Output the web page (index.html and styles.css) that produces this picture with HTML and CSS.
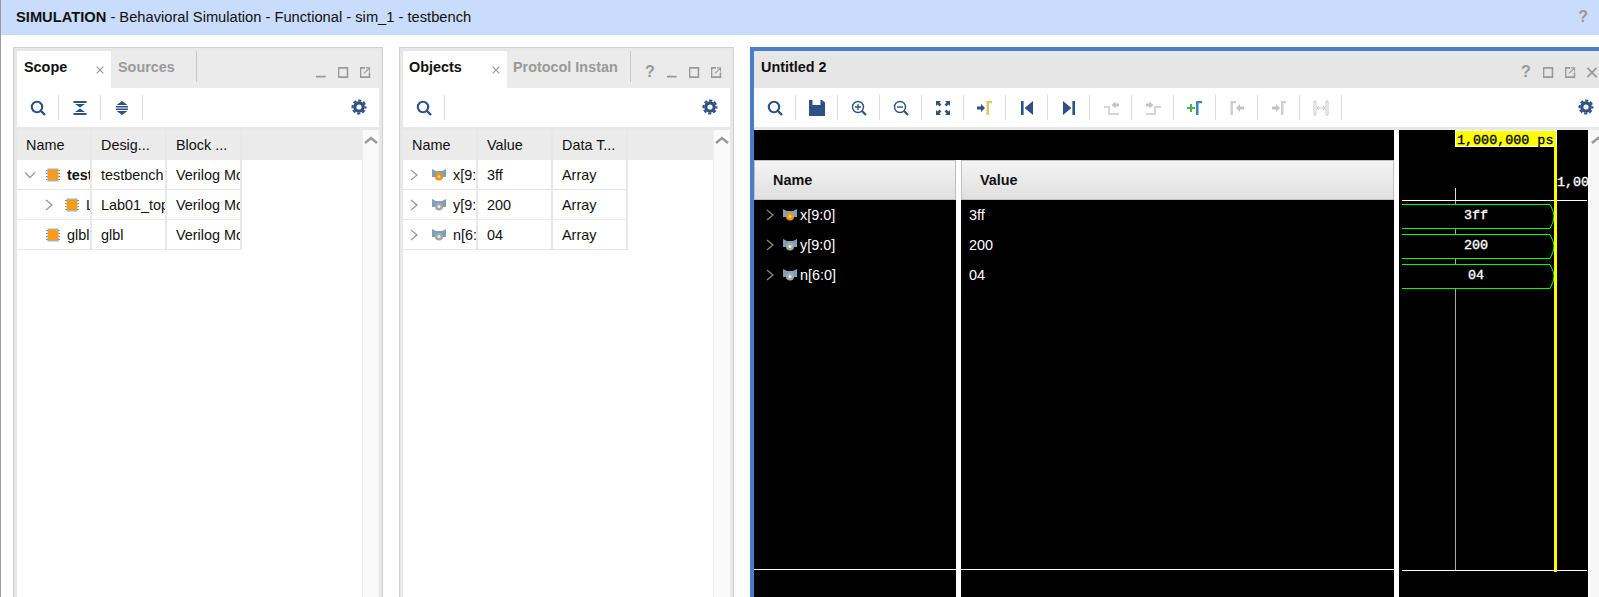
FILE: index.html
```html
<!DOCTYPE html>
<html lang="en">
<head>
    <meta charset="UTF-8">
    <title>SIMULATION - Behavioral Simulation</title>
    <link rel="stylesheet" href="styles.css">
</head>
<body>
    <svg class="defs" width="0" height="0">
        <symbol id="i-search" viewBox="0 0 16 16"><circle cx="7" cy="7" r="5.200" fill="none" stroke="currentColor" stroke-width="2.100"/><path d="M10.500 10.500l4.500 4.500" stroke="currentColor" stroke-width="2.400"/></symbol>
        <symbol id="i-zoomin" viewBox="0 0 16 16"><circle cx="7" cy="7" r="5.500" fill="none" stroke="currentColor" stroke-width="1.400"/><path d="M4 7h6M7 4v6" stroke="currentColor" stroke-width="1.300"/><path d="M11 11l4 4" stroke="currentColor" stroke-width="2.200"/></symbol>
        <symbol id="i-zoomout" viewBox="0 0 16 16"><circle cx="7" cy="7" r="5.500" fill="none" stroke="currentColor" stroke-width="1.400"/><path d="M4 7h6" stroke="currentColor" stroke-width="1.400"/><path d="M11 11l4 4" stroke="currentColor" stroke-width="2.200"/></symbol>
        <symbol id="i-gear" viewBox="0 0 16 16"><circle cx="8" cy="8" r="4.200" fill="none" stroke="currentColor" stroke-width="3.200"/><circle cx="8" cy="8" r="6.500" fill="none" stroke="currentColor" stroke-width="2" stroke-dasharray="3.200 1.900" stroke-dashoffset="1.600"/></symbol>
        <symbol id="i-collapse" viewBox="0 0 16 16"><path d="M1.500 1h13v2h-13zM1.500 13h13v2h-13zM3 4h10L8 7.500zM8 8.500L13 12H3z" fill="currentColor"/></symbol>
        <symbol id="i-expand" viewBox="0 0 16 16"><path d="M8 1l5.500 4h-11zM2 6h12v1.500H2zM2 8.500h12V10H2zM2.500 11h11L8 15z" fill="currentColor"/></symbol>
        <symbol id="i-save" viewBox="0 0 16 16"><path d="M0 0h3.500v5h8V0H13l3 2.500V16H0z" fill="currentColor"/></symbol>
        <symbol id="i-fit" viewBox="0 0 16 16"><path d="M1 1h5L4.400 2.600l2 2-1.800 1.800-2-2L1 6zM15 1v5l-1.600-1.600-2 2-1.800-1.800 2-2L10 1zM1 15v-5l1.600 1.600 2-2 1.800 1.800-2 2L6 15zM15 15h-5l1.600-1.600-2-2 1.800-1.800 2 2L15 10z" fill="currentColor"/></symbol>
        <symbol id="i-first" viewBox="0 0 16 16"><path d="M2 1h2.600v14H2zM14 1v14L5.600 8z" fill="currentColor"/></symbol>
        <symbol id="i-last" viewBox="0 0 16 16"><path d="M14 1h-2.600v14H14zM2 1v14l8.400-7z" fill="currentColor"/></symbol>
        <symbol id="i-gomark" viewBox="0 0 16 16"><path d="M0 6.500h4V4l4 4-4 4V9.500H0z" fill="#2f5085"/><path d="M9.500 15V1H15v2.200h-3V15z" fill="#e5c75f"/></symbol>
        <symbol id="i-prevedge" viewBox="0 0 16 16"><path d="M1 7h5v7h10" fill="none" stroke="#d5d5d5" stroke-width="2"/><path d="M16 3.500h-3.500V1.500L8.500 5l4 3.500v-2H16z" fill="#c4c4c4"/></symbol>
        <symbol id="i-nextedge" viewBox="0 0 16 16"><path d="M1 3.500h3.500V1.500l4 3.500-4 3.500v-2H1z" fill="#c4c4c4"/><path d="M1 14h9V7h6" fill="none" stroke="#d5d5d5" stroke-width="2"/></symbol>
        <symbol id="i-addmark" viewBox="0 0 16 16"><path d="M0 7h3V4h2v3h3v2H5v3H3V9H0z" fill="#4fae4f"/><path d="M9 15V1h6v2.200h-3.500V15z" fill="#3d86b5"/></symbol>
        <symbol id="i-prevmark" viewBox="0 0 16 16"><path d="M1.500 15V1H7v2.200H4V15z" fill="#cfcfcf"/><path d="M15 6.500h-4V4L7 8l4 4V9.500h4z" fill="#c4c4c4"/></symbol>
        <symbol id="i-nextmark" viewBox="0 0 16 16"><path d="M1 6.500h4V4l4 4-4 4V9.500H1z" fill="#c4c4c4"/><path d="M10 15V1h5v2.200h-2.500V15z" fill="#cfcfcf"/></symbol>
        <symbol id="i-span" viewBox="0 0 16 16"><path d="M1 1h2v14H1zM13 1h2v14h-2z" fill="none" stroke="#c8c8c8"/><path d="M4 8h8M4 8l2-2M4 8l2 2M12 8l-2-2M12 8l-2 2" fill="none" stroke="#c8c8c8"/></symbol>
        <symbol id="i-min" viewBox="0 0 12 12"><path d="M0 10.500h11" stroke="currentColor" stroke-width="2"/></symbol>
        <symbol id="i-box" viewBox="0 0 12 12"><path d="M1 1h10v10H1z" fill="none" stroke="currentColor" stroke-width="2"/></symbol>
        <symbol id="i-float" viewBox="0 0 12 12"><path d="M6 1H1v10h10V6" fill="none" stroke="currentColor" stroke-width="2"/><path d="M5 7l5-5M7 1h4v4" fill="none" stroke="currentColor" stroke-width="1.300"/></symbol>
        <symbol id="i-x" viewBox="0 0 12 12"><path d="M1 1l10 10M11 1L1 11" stroke="currentColor" stroke-width="1.800"/></symbol>
        <symbol id="i-right" viewBox="0 0 16 16"><path d="M5 3l6 5-6 5" fill="none" stroke="currentColor" stroke-width="1.300"/></symbol>
        <symbol id="i-down" viewBox="0 0 16 16"><path d="M3 5.500l5 5 5-5" fill="none" stroke="currentColor" stroke-width="1.300"/></symbol>
        <symbol id="i-up" viewBox="0 0 16 16"><path d="M2 11l6-5 6 5" fill="none" stroke="currentColor" stroke-width="2.400"/></symbol>
        <symbol id="i-chip" viewBox="0 0 14 14"><path d="M0 2.500h14M0 5.500h14M0 8.500h14M0 11.500h14" stroke="#8a8a8a"/><rect x="1.500" y="0.500" width="11" height="13" fill="#b0b0b0"/><rect x="2" y="2" width="10" height="10" fill="#f89c1c"/></symbol>
        <symbol id="i-sig-v" viewBox="0 0 14 14"><path d="M0 1l4 2h6l4-2v8H0z" fill="#7d9fb8"/><circle cx="7" cy="8.500" r="4" fill="#f0921e"/><circle cx="7" cy="8.500" r="1.300" fill="#fbe3b8"/></symbol>
        <symbol id="i-sig-g" viewBox="0 0 14 14"><path d="M0 1l4 2h6l4-2v8H0z" fill="#7d9fb8"/><circle cx="7" cy="8.500" r="4" fill="#a6a6a6"/><circle cx="7" cy="8.500" r="1.500" fill="#eeeeee"/></symbol>
    </svg>

    <div class="app">
        <div class="titlebar">
            <span><b>SIMULATION</b> - Behavioral Simulation - Functional - sim_1 - testbench</span>
            <span class="help title-help">?</span>
        </div>

        <div class="main">
            <section class="panel panel-scope">
                <div class="panel-head">
                    <div class="tab active tab-scope">Scope <svg class="tab-x"><use href="#i-x"/></svg></div>
                    <div class="tab tab-sources">Sources</div>
                    <div class="win-btns">
                        <svg class="win"><use href="#i-min"/></svg>
                        <svg class="win"><use href="#i-box"/></svg>
                        <svg class="win"><use href="#i-float"/></svg>
                    </div>
                </div>
                <div class="toolbar">
                    <div class="tool"><svg><use href="#i-search"/></svg></div><i class="sep"></i>
                    <div class="tool"><svg><use href="#i-collapse"/></svg></div><i class="sep"></i>
                    <div class="tool"><svg><use href="#i-expand"/></svg></div><i class="sep"></i>
                    <div class="tool gear"><svg><use href="#i-gear"/></svg></div>
                </div>
                <div class="table-wrap">
                    <div class="table">
                        <div class="grid-head">
                            <div class="cell">Name</div><div class="cell">Desig...</div><div class="cell">Block ...</div>
                        </div>
                        <div class="grid-row">
                            <div class="cell tree"><svg class="twist"><use href="#i-down"/></svg><svg class="icon"><use href="#i-chip"/></svg><b class="tree-label">testbench</b></div>
                            <div class="cell">testbench</div><div class="cell">Verilog Module</div>
                        </div>
                        <div class="grid-row">
                            <div class="cell tree level1"><svg class="twist"><use href="#i-right"/></svg><svg class="icon"><use href="#i-chip"/></svg><span class="tree-label">Lab01_top</span></div>
                            <div class="cell">Lab01_top</div><div class="cell">Verilog Module</div>
                        </div>
                        <div class="grid-row">
                            <div class="cell tree"><span class="twist"></span><svg class="icon"><use href="#i-chip"/></svg><span class="tree-label">glbl</span></div>
                            <div class="cell">glbl</div><div class="cell">Verilog Module</div>
                        </div>
                    </div>
                    <div class="vscroll"><svg class="up"><use href="#i-up"/></svg></div>
                </div>
            </section>

            <section class="panel panel-objects">
                <div class="panel-head">
                    <div class="tab active tab-objects">Objects <svg class="tab-x"><use href="#i-x"/></svg></div>
                    <div class="tab tab-protocol">Protocol Instan</div>
                    <div class="win-btns">
                        <span class="help">?</span>
                        <svg class="win"><use href="#i-min"/></svg>
                        <svg class="win"><use href="#i-box"/></svg>
                        <svg class="win"><use href="#i-float"/></svg>
                    </div>
                </div>
                <div class="toolbar">
                    <div class="tool"><svg><use href="#i-search"/></svg></div><i class="sep"></i>
                    <div class="tool gear"><svg><use href="#i-gear"/></svg></div>
                </div>
                <div class="table-wrap">
                    <div class="table">
                        <div class="grid-head">
                            <div class="cell">Name</div><div class="cell">Value</div><div class="cell">Data T...</div>
                        </div>
                        <div class="grid-row">
                            <div class="cell obj"><svg class="twist"><use href="#i-right"/></svg><svg class="icon"><use href="#i-sig-v"/></svg><span class="tree-label">x[9:0]</span></div>
                            <div class="cell">3ff</div><div class="cell">Array</div>
                        </div>
                        <div class="grid-row">
                            <div class="cell obj"><svg class="twist"><use href="#i-right"/></svg><svg class="icon"><use href="#i-sig-g"/></svg><span class="tree-label">y[9:0]</span></div>
                            <div class="cell">200</div><div class="cell">Array</div>
                        </div>
                        <div class="grid-row">
                            <div class="cell obj"><svg class="twist"><use href="#i-right"/></svg><svg class="icon"><use href="#i-sig-g"/></svg><span class="tree-label">n[6:0]</span></div>
                            <div class="cell">04</div><div class="cell">Array</div>
                        </div>
                    </div>
                    <div class="vscroll"><svg class="up"><use href="#i-up"/></svg></div>
                </div>
            </section>

            <section class="panel panel-wave">
                <div class="panel-head wave-head">
                    <div class="wave-title">Untitled 2</div>
                    <div class="win-btns">
                        <span class="help">?</span>
                        <svg class="win"><use href="#i-box"/></svg>
                        <svg class="win"><use href="#i-float"/></svg>
                        <svg class="win"><use href="#i-x"/></svg>
                    </div>
                </div>
                <div class="toolbar">
                    <div class="tool"><svg><use href="#i-search"/></svg></div><i class="sep"></i>
                    <div class="tool"><svg><use href="#i-save"/></svg></div><i class="sep"></i>
                    <div class="tool"><svg><use href="#i-zoomin"/></svg></div><i class="sep"></i>
                    <div class="tool"><svg><use href="#i-zoomout"/></svg></div><i class="sep"></i>
                    <div class="tool"><svg><use href="#i-fit"/></svg></div><i class="sep"></i>
                    <div class="tool"><svg><use href="#i-gomark"/></svg></div><i class="sep"></i>
                    <div class="tool"><svg><use href="#i-first"/></svg></div><i class="sep"></i>
                    <div class="tool"><svg><use href="#i-last"/></svg></div><i class="sep"></i>
                    <div class="tool"><svg><use href="#i-prevedge"/></svg></div><i class="sep"></i>
                    <div class="tool"><svg><use href="#i-nextedge"/></svg></div><i class="sep"></i>
                    <div class="tool"><svg><use href="#i-addmark"/></svg></div><i class="sep"></i>
                    <div class="tool"><svg><use href="#i-prevmark"/></svg></div><i class="sep"></i>
                    <div class="tool"><svg><use href="#i-nextmark"/></svg></div><i class="sep"></i>
                    <div class="tool"><svg><use href="#i-span"/></svg></div><i class="sep"></i>
                    <div class="tool gear"><svg><use href="#i-gear"/></svg></div>
                </div>
                <div class="wave-body">
                    <div class="signals">
                        <div class="signals-top"></div>
                        <div class="signals-cols">
                            <div class="sig-col sig-name">
                                <div class="sig-head">Name</div>
                                <div class="sig-row"><svg class="twist"><use href="#i-right"/></svg><svg class="icon"><use href="#i-sig-v"/></svg><span>x[9:0]</span></div>
                                <div class="sig-row"><svg class="twist"><use href="#i-right"/></svg><svg class="icon"><use href="#i-sig-g"/></svg><span>y[9:0]</span></div>
                                <div class="sig-row"><svg class="twist"><use href="#i-right"/></svg><svg class="icon"><use href="#i-sig-g"/></svg><span>n[6:0]</span></div>
                                <div class="sig-foot"></div>
                            </div>
                            <div class="sig-col sig-value">
                                <div class="sig-head">Value</div>
                                <div class="sig-row">3ff</div>
                                <div class="sig-row">200</div>
                                <div class="sig-row">04</div>
                                <div class="sig-foot"></div>
                            </div>
                        </div>
                    </div>

                    <svg class="wave" width="189" height="467" viewBox="0 0 189 467">
                        <path d="M56.500 58V70" stroke="#ddd"/>
                        <path d="M56.500 70V440" stroke="#aaa"/>
                        <path d="M3 70.500H188" stroke="#fff"/>
                        <path d="M3 74.500H151L154 81 155 86 154 92 151 98.500H3" fill="#000" stroke="#0f0"/>
                        <path d="M3 104.500H151L154 111 155 116 154 122 151 128.500H3" fill="#000" stroke="#0f0"/>
                        <path d="M3 134.500H151L154 141 155 146 154 152 151 158.500H3" fill="#000" stroke="#0f0"/>
                        <path d="M3 440.500H188" stroke="#fff"/>
                        <rect x="56.500" y="0.500" width="101" height="16" fill="#ff0" stroke="#fff"/>
                        <rect x="155" y="16" width="3" height="426" fill="#ff0"/>
                        <text class="wave-text time-label" x="58" y="14">1,000,000 ps</text>
                        <text class="wave-text" x="158" y="56">1,000,000 ps</text>
                        <text class="wave-text" x="77" y="89" text-anchor="middle">3ff</text>
                        <text class="wave-text" x="77" y="119" text-anchor="middle">200</text>
                        <text class="wave-text" x="77" y="149" text-anchor="middle">04</text>
                    </svg>

                    <div class="vscroll wave-scroll"><svg class="up"><use href="#i-up"/></svg></div>
                </div>
            </section>
        </div>
    </div>
</body>
</html>
```

FILE: styles.css
```css
html, body {
    margin: 0;
    height: 100%;
    overflow: hidden;
}
body {
    font-family: "Liberation Sans", Arial, sans-serif;
    font-size: 14.4px;
    color: #111;
    background: #fff;
}
.defs {
    position: absolute;
}
.app {
    display: flex;
    flex-direction: column;
    height: 100%;
    border-left: 1px solid #999;
}
.titlebar {
    display: flex;
    justify-content: space-between;
    align-items: center;
    flex: none;
    height: 35px;
    padding: 0 11px 2px 15px;
    box-sizing: border-box;
    font-size: 14.7px;
    background: #c9dcfb;
    white-space: nowrap;
}
.help {
    width: 22px;
    text-align: center;
    font-size: 16px;
    font-weight: bold;
    color: #999;
}
.title-help {
    width: auto;
}
.main {
    display: flex;
    flex: 1;
    gap: 16px;
    min-height: 0;
    padding: 12px 0 0 12px;
    overflow: hidden;
}
.panel {
    display: flex;
    flex-direction: column;
    flex: none;
    box-sizing: border-box;
    padding: 3px 3px 0;
    background: #e8e8e8;
    border: 1px solid #d0d0d0;
    border-bottom: none;
}
.panel-scope {
    width: 370px;
}
.panel-objects {
    width: 335px;
}
.panel-wave {
    width: 860px;
    padding: 0;
    border: 4px solid #4a7cc9;
    border-bottom: none;
}

/* header with tabs */
.panel-head {
    display: flex;
    flex: none;
    height: 37px;
    background: #ebebeb;
}
.wave-head {
    background: #e6e6e6;
}
.wave-title {
    padding: 8px 0 0 7px;
    font-weight: bold;
}
.tab {
    position: relative;
    box-sizing: border-box;
    height: 37px;
    padding: 8px 0 0 7px;
    font-weight: bold;
    white-space: nowrap;
}
.tab.active {
    background: #fff;
}
.tab-scope {
    width: 94px;
}
.tab-objects {
    width: 104px;
    padding-left: 6px;
}
.tab-sources, .tab-protocol {
    height: 31px;
    color: #999;
    border-right: 1px solid #c8c8c8;
}
.tab-protocol {
    padding-left: 6px;
}
.tab-sources {
    width: 86px;
}
.tab-protocol {
    width: 124px;
}
.tab-x {
    position: absolute;
    right: 7px;
    top: 15px;
    width: 8px;
    height: 8px;
    color: #999;
}
.win-btns {
    display: flex;
    align-items: center;
    margin-left: auto;
    padding: 5px 3px 0 0;
    height: 32px;
    color: #999;
}
.win {
    width: 11px;
    height: 11px;
    padding: 0 5.5px;
}

/* toolbar */
.toolbar {
    display: flex;
    align-items: center;
    flex: none;
    height: 39px;
    background: #fff;
    color: #2f5085;
}
.tool {
    display: flex;
    justify-content: center;
    width: 41px;
}
.tool svg {
    width: 16px;
    height: 16px;
}
.sep {
    width: 1px;
    height: 25px;
    background: #ddd;
}
.gear {
    margin-left: auto;
    padding-bottom: 1px;
}

/* tables */
.table-wrap {
    display: flex;
    flex: 1;
    min-height: 0;
    margin-top: 3px;
    background: #fff;
}
.table {
    flex: 1;
}
.grid-head, .grid-row {
    display: grid;
    grid-template-columns: repeat(3, 75px);
}
.grid-head {
    height: 30px;
    background: #ebebeb;
}
.grid-row {
    height: 30px;
}
.cell {
    display: flex;
    align-items: center;
    box-sizing: border-box;
    padding-left: 9px;
    overflow: hidden;
    white-space: nowrap;
    border-right: 2px solid #e8e8e8;
}
.grid-row .cell {
    border-bottom: 1px solid #e8e8e8;
}
.tree {
    padding-left: 5px;
}
.tree.level1 {
    padding-left: 24px;
}
.obj {
    padding-left: 3px;
}
.twist {
    flex: none;
    width: 16px;
    height: 16px;
    color: #999;
}
.tree .twist {
    margin-right: 8px;
}
.obj .twist {
    margin-right: 10px;
}
.icon {
    flex: none;
    width: 14px;
    height: 14px;
    margin-right: 7px;
}
.tree-label {
    flex: none;
}
.vscroll {
    flex: none;
    width: 17px;
    box-sizing: border-box;
    background: #fafafa;
    border-left: 1px solid #eee;
    color: #999;
}
.up {
    display: block;
    width: 16px;
    height: 16px;
    margin-top: 2px;
}

/* waveform */
.wave-body {
    display: flex;
    flex: 1;
    min-height: 0;
    margin-top: 3px;
    background: #fff;
}
.signals {
    display: flex;
    flex-direction: column;
    flex: none;
    width: 640px;
    margin-right: 5px;
}
.signals-top {
    flex: none;
    height: 30px;
    background: #000;
}
.signals-cols {
    display: flex;
    flex: 1;
    gap: 5px;
    min-height: 0;
}
.sig-col {
    display: flex;
    flex-direction: column;
    background: #000;
    color: #fff;
}
.sig-name {
    flex: none;
    width: 202px;
}
.sig-value {
    flex: 1;
}
.sig-head {
    flex: none;
    display: flex;
    align-items: center;
    box-sizing: border-box;
    height: 40px;
    font-weight: bold;
    color: #111;
    background: linear-gradient(#f4f4f4, #e0e0e0);
    border: 1px solid #c0c0c0;
}
.sig-name .sig-head {
    padding-left: 18px;
}
.sig-value .sig-head {
    padding-left: 18px;
}
.sig-row {
    display: flex;
    align-items: center;
    flex: none;
    height: 30px;
}
.sig-name .sig-row {
    padding-left: 8px;
}
.sig-name .twist {
    margin-right: 5px;
    color: #888;
}
.sig-name .icon {
    margin-right: 3px;
}
.sig-value .sig-row {
    padding-left: 8px;
}
.sig-foot {
    flex: none;
    height: 28px;
    margin-top: auto;
    box-sizing: border-box;
    border-top: 1px solid #fff;
}
.wave {
    flex: none;
    background: #000;
}
.wave-text {
    font-family: "Liberation Mono", monospace;
    font-size: 13.4px;
    fill: #fff;
    stroke: #fff;
    stroke-width: 0.35px;
}
.time-label {
    fill: #000;
    stroke: #000;
}
.wave-scroll {
    margin-left: 2px;
    background: #f6f6f6;
    border-left: none;
}
```
